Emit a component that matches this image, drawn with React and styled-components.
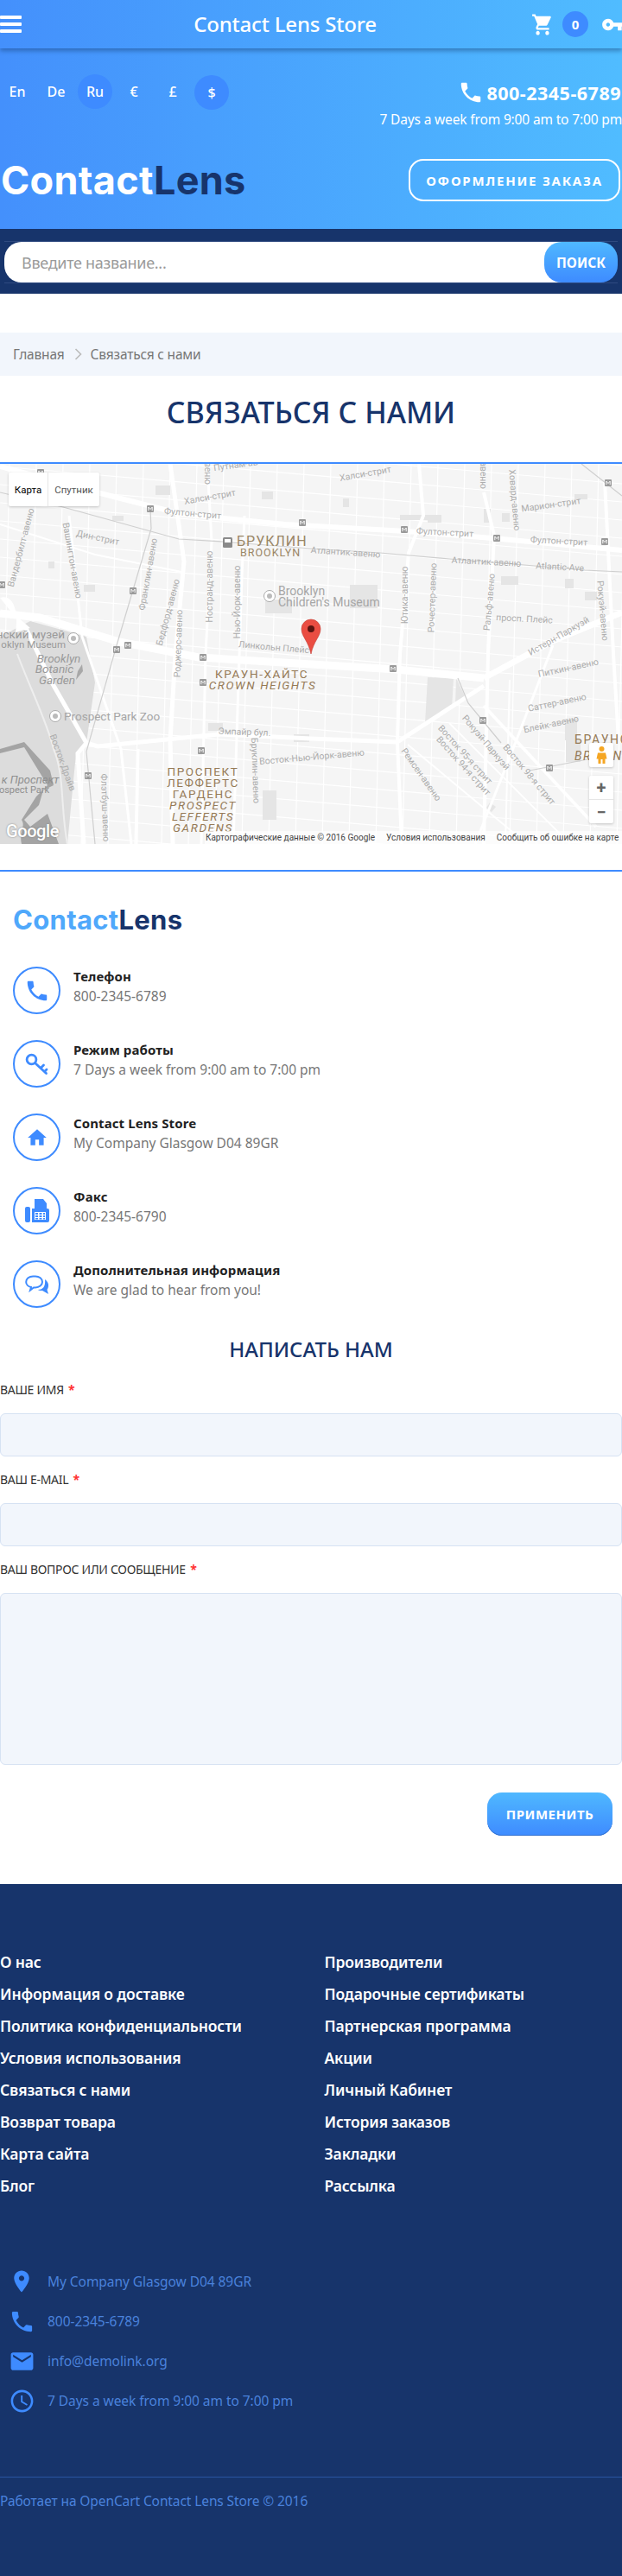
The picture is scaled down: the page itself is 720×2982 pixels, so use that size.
import React from "react";
import styled, { createGlobalStyle } from "styled-components";

const BLUE = "#3e8bff";
const NAVY = "#17346b";
const FONT = '"Noto Sans", "Open Sans", sans-serif';

const Global = createGlobalStyle`
  * { box-sizing: border-box; }
  html, body { margin: 0; padding: 0; background: #fff; }
  body { font-family: ${FONT}; color: #777; overflow-x: hidden; }
`;

const Page = styled.div`width: 720px; overflow: hidden;`;
const Header = styled.header`
  background: linear-gradient(90deg, #4490fc 0%, #50bcff 100%);
  height: 265px; color: #fff;
`;
const TopBar = styled.div`
  height: 56px; display: flex; align-items: center; overflow: hidden;
  background: linear-gradient(90deg, #4490fc 0%, #50bcff 100%);
  box-shadow: 0 3px 5px rgba(20, 60, 110, .45);
  position: relative;
`;
const Burger = styled.div`
  width: 25px; height: 20px; display: flex; flex-direction: column; justify-content: space-between;
  span { display: block; height: 4px; background: #fff; border-radius: 1px; }
`;
const Title = styled.div`
  flex: 1; text-align: center; font-size: 24px; font-weight: 500; padding-left: 20px; letter-spacing: -.2px; line-height: 30px;
`;
const TopRight = styled.div`
  width: 105px; display: flex; align-items: center; flex: none; height: 56px;
`;
const Badge = styled.div`
  width: 30px; height: 30px; border-radius: 50%; background: ${BLUE}; margin-left: 10px;
  display: flex; align-items: center; justify-content: center; font-size: 15px; font-weight: 700; flex: none;
`;
const Ico = styled.svg`
  display: block; flex: none; fill: ${p => p.$c || "currentColor"};
`;
const KeyWrap = styled.div`margin-left: 15px; width: 25px; overflow: hidden; flex: none;`;
const InfoRow = styled.div`
  display: flex; justify-content: space-between; padding-top: 30px; height: 92px;
`;
const Langs = styled.div`display: flex; gap: 5px; height: 41px;`;
const Lang = styled.div`
  width: 40px; height: 40px; border-radius: 50%; display: flex; align-items: center; justify-content: center;
  font-size: 16px; font-weight: 500; background: ${p => (p.$on ? BLUE : "transparent")};
  margin-top: ${p => p.$drop || 0}px;
`;
const Contact = styled.div`display: flex; flex-direction: column; align-items: flex-end;`;
const PhoneLine = styled.div`
  height: 42px; display: flex; align-items: center; gap: 3px; font-size: 21.5px; font-weight: 700; letter-spacing: .5px; margin-right: 1px;
`;
const Hours = styled.div`font-size: 15.5px; line-height: 20px; letter-spacing: -.15px;`;
const LogoRow = styled.div`
  display: flex; justify-content: space-between; align-items: center; padding-top: 36px; padding-right: 2px;
`;
const Logo = styled.div`
  font-family: Inter, "Noto Sans", sans-serif; font-weight: 700; font-size: ${p => p.$size}px; line-height: 1;
  letter-spacing: ${p => p.$ls}px; color: ${p => p.$c};
  margin-left: ${p => p.$ml || 0}px;
  span { color: ${NAVY}; }
`;
const OutlineBtn = styled.div`
  width: 245px; height: 49px; border: 2px solid #fff; border-radius: 17px;
  display: flex; align-items: center; justify-content: center;
  font-size: 15px; font-weight: 700; letter-spacing: 1.75px;
`;
const SearchBand = styled.div`background: ${NAVY}; height: 75px; padding: 14px 5px 0;`;
const SearchBox = styled.div`
  height: 49px; display: flex; border-top: 1px solid #2f4a80; border-bottom: 1px solid #2f4a80; padding-bottom: 1px;
`;
const SearchInput = styled.input`
  flex: 1; min-width: 0; height: 47px; border: 0; outline: 0; background: #fff; border-radius: 20px 0 0 20px;
  padding: 0 20px; font: 400 18px ${FONT}; letter-spacing: -.3px; margin-right: -20px;
  &::placeholder { color: #9a9a9a; opacity: 1; }
`;
const SearchBtn = styled.div`
  width: 85px; height: 47px; border-radius: 20px; position: relative;
  background: linear-gradient(180deg, #4fb8ff, #3e8bff);
  display: flex; align-items: center; justify-content: center; color: #fff; font-size: 15.5px; font-weight: 700;
`;
const Crumbs = styled.nav`
  margin-top: 45px; height: 50px; background: #f2f6fc; display: flex; align-items: center; padding-left: 15px;
  font-size: 15.5px; letter-spacing: -.2px; color: #777;
`;
const CrumbSep = styled.svg`width: 9px; height: 14px; margin: 0 10px 0 11px; fill: none; stroke: #bbb; stroke-width: 1.6;`;
const H1 = styled.h1`
  margin: 22px 0 38px; text-align: center; font-size: 34px; line-height: 40px; font-weight: 500; color: ${NAVY};
`;
const MapFrame = styled.div`
  position: relative; height: 442px; border-top: 2px solid ${BLUE}; overflow: hidden; background: #f5f5f5;
  svg.map { display: block; }
`;
const MapType = styled.div`
  position: absolute; left: 10px; top: 10px; width: 105px; height: 39px; background: #fff; border-radius: 2px;
  box-shadow: 0 1px 3px rgba(0,0,0,.2); display: flex; font: 400 11.5px Roboto, sans-serif; color: #565656;
`;
const MapTab = styled.div`
  display: flex; align-items: center; justify-content: center; width: ${p => p.$w}px;
  color: ${p => (p.$on ? "#000" : "#565656")}; border-right: ${p => (p.$on ? "1px solid #e6e6e6" : "0")};
`;
const Peg = styled.div`
  position: absolute; left: 682px; top: 323px; width: 28px; height: 28px; background: #fff; border-radius: 2px;
  box-shadow: 0 1px 3px rgba(0,0,0,.2); display: flex; align-items: center; justify-content: center;
`;
const Zoom = styled.div`
  position: absolute; left: 682px; top: 361px; width: 28px; height: 55px; background: #fff; border-radius: 2px;
  box-shadow: 0 1px 3px rgba(0,0,0,.2); display: flex; flex-direction: column; color: #666;
  font: 700 20px Roboto, sans-serif;
`;
const ZoomBtn = styled.div`
  flex: 1; display: flex; align-items: center; justify-content: center; line-height: 1;
  & + & { border-top: 1px solid #e6e6e6; }
`;
const Attribution = styled.div`
  position: absolute; right: 0; bottom: 0; width: 483px; height: 15px; background: rgba(255,255,255,.7);
  display: flex; gap: 13px; align-items: center; padding-left: 1px; white-space: nowrap;
  font: 400 10px Roboto, sans-serif; color: #444;
`;
const GoogleMark = styled.div`
  position: absolute; left: 7px; top: 413px; font: 500 20px Roboto, sans-serif; color: #fff; letter-spacing: -.4px;
  text-shadow: 0 0 2px #777;
`;
const Rule = styled.div`height: 2px; background: ${BLUE}; margin-top: 30px;`;
const Info = styled.section`padding: 40px 0 0 15px;`;
const Rows = styled.div`display: flex; flex-direction: column; gap: 30px; margin-top: 39px;`;
const Row = styled.div`display: flex; gap: 15px; height: 55px;`;
const Circle = styled.div`
  width: 55px; height: 55px; border-radius: 50%; border: 2px solid ${BLUE}; flex: none;
  display: flex; align-items: center; justify-content: center; color: ${BLUE};
`;
const RowTitle = styled.div`font-size: 15px; line-height: 22px; font-weight: 700; color: #222; letter-spacing: .1px; margin-bottom: 1px;`;
const RowValue = styled.div`font-size: 15.5px; line-height: 22px; color: #777; letter-spacing: 0;`;
const H2 = styled.h2`
  margin: 33px 0 22px; text-align: center; font-size: 24px; line-height: 30px; font-weight: 500; color: ${NAVY};
`;
const Label = styled.label`
  display: block; font-size: 14px; line-height: 20px; color: #333; letter-spacing: -.3px; margin-bottom: 17px;
  b { color: #f33; font-weight: 700; margin-left: 2px; }
`;
const Field = styled.input`
  display: block; width: 100%; height: 50px; background: #f2f6fc; border: 1px solid #d6e2f3; border-radius: 6px;
  margin-bottom: 17px; outline: 0;
`;
const Area = styled.textarea`
  display: block; width: 100%; height: 199px; background: #f2f6fc; border: 1px solid #d6e2f3; border-radius: 6px;
  outline: 0; resize: none; margin: 0;
`;
const BtnRow = styled.div`display: flex; justify-content: flex-end; padding: 32px 11px 56px 0;`;
const SubmitBtn = styled.div`
  width: 145px; height: 50px; border-radius: 17px; background: linear-gradient(180deg, #4fb8ff, #3e8bff);
  box-shadow: inset 0 -1px 0 #2f6fd0;
  display: flex; align-items: center; justify-content: center; color: #fff; font-size: 15px; font-weight: 700; letter-spacing: .5px;
`;
const Footer = styled.footer`background: ${NAVY}; height: 801px; padding-top: 72px;`;
const LinkCols = styled.div`display: grid; grid-template-columns: 375.5px 1fr;`;
const FootLink = styled.div`color: #fff; font-size: 17.5px; font-weight: 600; line-height: 37px; letter-spacing: -.15px;`;
const FootInfo = styled.div`margin-top: 69px; padding-left: 10px;`;
const FootRow = styled.div`
  height: 46px; display: flex; align-items: center; gap: 15px; font-size: 15.5px; color: #4a82dc; letter-spacing: -.05px;
`;
const IconBox = styled.div`width: 30px; display: flex; justify-content: center; flex: none;`;
const FootLine = styled.div`height: 1px; background: #2a55a0; margin-top: 65px;`;
const Copy = styled.div`font-size: 15.5px; line-height: 20px; color: #4a82dc; margin-top: 17px; letter-spacing: -.1px;`;

const P = {
  phone: "M6.62 10.79c1.44 2.83 3.76 5.14 6.59 6.59l2.2-2.2c.27-.27.67-.36 1.02-.24 1.12.37 2.33.57 3.57.57.55 0 1 .45 1 1V20c0 .55-.45 1-1 1-9.39 0-17-7.61-17-17 0-.55.45-1 1-1h3.5c.55 0 1 .45 1 1 0 1.25.2 2.45.57 3.57.11.35.03.74-.25 1.02l-2.2 2.2z",
  cart: "M7 18c-1.1 0-1.99.9-1.99 2S5.9 22 7 22s2-.9 2-2-.9-2-2-2zM1 2v2h2l3.6 7.59-1.35 2.45c-.16.28-.25.61-.25.96 0 1.1.9 2 2 2h12v-2H7.42c-.14 0-.25-.11-.25-.25l.03-.12.9-1.63h7.45c.75 0 1.41-.41 1.75-1.03l3.58-6.49c.08-.14.12-.31.12-.48 0-.55-.45-1-1-1H5.21l-.94-2H1zm16 16c-1.1 0-1.99.9-1.99 2s.89 2 1.99 2 2-.9 2-2-.9-2-2-2z",
  key: "M12.65 10C11.83 7.67 9.61 6 7 6c-3.31 0-6 2.69-6 6s2.69 6 6 6c2.61 0 4.83-1.67 5.65-4H17v4h4v-4h2v-4H12.65zM7 14c-1.1 0-2-.9-2-2s.9-2 2-2 2 .9 2 2-.9 2-2 2z",
  home: "M10 20v-6h4v6h5v-8h3L12 3 2 12h3v8z",
  place: "M12 2C8.13 2 5 5.13 5 9c0 5.25 7 13 7 13s7-7.75 7-13c0-3.87-3.13-7-7-7zm0 9.5c-1.38 0-2.5-1.12-2.5-2.5s1.12-2.5 2.5-2.5 2.5 1.12 2.5 2.5-1.12 2.5-2.5 2.5z",
  mail: "M20 4H4c-1.1 0-1.99.9-1.99 2L2 18c0 1.1.9 2 2 2h16c1.1 0 2-.9 2-2V6c0-1.1-.9-2-2-2zm0 4l-8 5-8-5V6l8 5 8-5v2z",
  clock: "M11.99 2C6.47 2 2 6.48 2 12s4.47 10 9.99 10C17.52 22 22 17.52 22 12S17.52 2 11.99 2zM12 20c-4.42 0-8-3.58-8-8s3.58-8 8-8 8 3.58 8 8-3.58 8-8 8zm.5-13H11v6l5.25 3.15.75-1.23-4.5-2.67z",
};

const Icon = ({ d, w = 24, h, c, rotate }) => (
  <Ico $c={c} width={w} height={h || w} viewBox="0 0 24 24" preserveAspectRatio="none">
    <path d={d} transform={rotate ? `rotate(${rotate} 12 12)` : undefined} />
  </Ico>
);

const FaxIcon = () => (
  <Ico width="28" height="27" viewBox="0 0 28 27" $c={BLUE}>
    <rect x="0" y="9" width="6" height="18" rx="2" />
    <path fillRule="evenodd" d="M8 11h3V0h10l4 5v6h1a2 2 0 0 1 2 2v12a2 2 0 0 1-2 2H8zM11 15v9h13v-9z" />
    <path d="M12 16h3v2h-3zM16.5 16h3v2h-3zM21 16h2v2h-2zM12 19h3v2h-3zM16.5 19h3v2h-3zM21 19h2v2h-2zM12 22h3v1.5h-3zM16.5 22h3v1.5h-3zM21 22h2v1.5h-2z" />
  </Ico>
);
const KeyIcon = () => (
  <Ico width="28" height="26" viewBox="0 0 28 26" $c="none">
    <g fill="none" stroke={BLUE} strokeWidth="2.8" strokeLinecap="round">
      <circle cx="7.500" cy="7.500" r="5.400" />
      <path d="M11.500 11.500l13 12M18 17.500l3.500-3.500M22.500 21.500l2.500-2.500" />
    </g>
  </Ico>
);
const ChatIcon = () => (
  <Ico width="28" height="22" viewBox="0 0 28 22" $c="none">
    <path d="M1.200 8a8 6.600 0 0 1 8-6.600H12A8 6.600 0 0 1 20 8a8 6.400 0 0 1-8 6.400H10L6 17.500l1-3.500A7 6 0 0 1 1.200 8z" fill="none" stroke={BLUE} strokeWidth="2" />
    <path d="M23 5c3 2 4.500 5 4 8-.2 2-1 3-1.500 4l1.500 5-7-4c-2 .2-4 0-5-1 5 0 9-3 8-12z" fill={BLUE} />
  </Ico>
);

const Pin = ({ x, y }) => <g transform={`translate(${x - 4} ${y - 4})`}><rect width="8" height="8" rx="1" fill="#9a9a9a" /><path d="M1.800 6.200V2l2.200 2.600L6.200 2v4.200" fill="none" stroke="#fff" strokeWidth=".9" /></g>;

const H_LINES = Array.from({ length: 30 }, (_, i) => -60 + i * 21);
const V_LINES = Array.from({ length: 26 }, (_, i) => -20 + i * 31);

const ROADS = [
  ["M0,3 L120,35 L210,58 L330,70 L470,78 L570,86 L720,100", 6],
  ["M0,173 L46,178 L138,206 L230,224 L459,238 L560,248", 9],
  ["M560,248 L640,205 L720,172", 7],
  ["M30,190 L60,253 L100,323 L90,335 L97,440", 5],
  ["M100,323 L113,327 L253,313 L360,318 L460,322 L560,257", 5],
  ["M197,0 L213,113 L203,220 L197,320 L200,440", 5],
  ["M485,0 L490,60 L473,103 L463,220 L460,322 L465,440", 4],
  ["M560,33 L572,83 L565,220 L560,440", 4],
  ["M283,60 L280,130 L270,440", 3],
  ["M240,0 L245,90 L238,220 L233,440", 3],
  ["M700,20 L710,220 L716,320", 4],
  ["M80,60 L95,200 L140,330 L152,440", 3],
  ["M160,330 L158,440", 3],
  ["M472,325 L610,440", 2],
  ["M520,300 L660,440", 2],
  ["M560,280 L690,420", 4],
  ["M590,250 L585,440", 2],
  ["M640,210 L590,340 L550,440", 3],
  ["M0,70 L110,105 L210,125", 2],
];
const RAILS = [
  "M0,33 L73,50 L207,87 L257,90 L360,98 L440,103 L520,110 L607,117 L677,123 L720,125",
  "M174,53 L175,75 L135,210 L100,333 L110,440",
  "M530,248 L542,277 L580,323",
  "M613,355 L680,342",
  "M673,0 L720,37",
];
const BLOCKS = [
  "M405,140H437V167H405z", "M307,157H338V173H307z", "M495,247L525,248L523,283L492,300z", "M528,248L540,273L527,280z",
  "M180,25L197,25L197,36L180,36z", "M303,32H316V41H303z", "M397,40H404V50H397z", "M463,59H511V65H463z", "M495,60H511V68H495z",
  "M560,52H568V68H560z", "M581,57H590V67H581z", "M580,130H600V140H580z", "M654,133H664V144H654z", "M677,148H691V158H677z",
  "M56,113H63V121H56z", "M97,140H110V148H97z", "M241,300H258V309H241z", "M340,313H358V322H340z", "M304,378H320V412H304z",
  "M567,392L574,397L569,403L563,398z", "M654,295H668V320H654z", "M655,320H672V345H655z", "M130,60H143V66H130z", "M665,35H680V41H665z",
];

const labels = [
  ["Халси-стрит", 243, 39, -10], ["Халси-стрит", 423, 12, -10], ["Фултон-стрит", 223, 58, 5], ["Фултон-стрит", 515, 80, 3],
  ["Фултон-стрит", 647, 90, 3], ["Путнам-ав", 273, 2, -8], ["Марион-стрит", 638, 48, -8], ["Ховард-авеню", 595, 42, 85],
  ["авеню", 559, 13, 90], ["авеню", 240, 8, 90], ["Вандербилт-авеню", 25, 97, -75], ["Вашингтон-авеню", 83, 112, 80],
  ["Дин-стрит", 113, 86, 12], ["Франклин-авеню", 172, 128, -80], ["Бедфорд-авеню", 195, 172, -75], ["Роджерс-авеню", 207, 208, -88],
  ["Ностранд-авеню", 243, 142, -90], ["Нью-Йорк-авеню", 275, 160, -90], ["Линкольн Плейс", 317, 213, 5], ["Атлантик-авеню", 400, 103, 4],
  ["Атлантик-авеню", 563, 114, 3], ["Atlantic-Ave", 648, 120, 3], ["Ютика-авеню", 469, 152, -90], ["Рочестер-авеню", 501, 155, -88],
  ["Ральф-авеню", 567, 160, -85], ["просп. Плейс", 607, 180, 3], ["Рокуэй-авеню", 697, 170, 85], ["Истерн-Паркуэй", 647, 200, -30],
  ["Питкин-авеню", 658, 237, -12], ["Саттер-авеню", 645, 277, -12], ["Блейк-авеню", 638, 302, -12], ["Рокуэй-Паркуэй", 562, 323, 50],
  ["Восток 98-я стрит", 612, 360, 50], ["Восток 95-я стрит", 538, 337, 48], ["Восток 94-я стрит", 536, 350, 48], ["Ремсен-авеню", 487, 360, 55],
  ["Восток-Нью-Йорк-авеню", 361, 340, -5], ["Бруклин-авеню", 295, 355, 88], ["Эмпайр бул.", 283, 311, 2], ["Флэтбуш-авеню", 121, 398, 88],
  ["Восток-Драйв", 72, 346, 70],
];
const hood = [
  ["КРАУН-ХАЙТС", 303, 248, "normal"], ["CROWN HEIGHTS", 304, 261, "italic"],
  ["ПРОСПЕКТ", 235, 361, "normal"], ["ЛЕФФЕРТС", 235, 374, "normal"], ["ГАРДЕНС", 235, 387, "normal"],
  ["PROSPECT", 235, 400, "italic"], ["LEFFERTS", 235, 413, "italic"], ["GARDENS", 235, 426, "italic"],
];

const MapArt = () => (
  <svg className="map" width="720" height="440" viewBox="0 0 720 440" fontFamily="Roboto, sans-serif">
    <rect width="720" height="440" fill="#f5f5f5" />
    {H_LINES.map(y => <line key={y} x1="0" y1={y} x2="720" y2={y + 62} stroke="#fff" strokeWidth="1.2" />)}
    {V_LINES.map(x => <line key={x} x1={x} y1="0" x2={x - 10} y2="440" stroke="#fff" strokeWidth="1.2" />)}
    <path d="M0,200 L35,182 L100,200 L110,253 L100,323 L88,335 L78,440 L0,440z" fill="#dcdcdc" />
    <path d="M0,155 C15,150 22,170 18,195 L35,190 L12,170z" fill="#fff" />
    {BLOCKS.map((d, i) => <path key={i} d={d} fill="#e5e5e5" />)}
    {ROADS.map(([d, w], i) => <path key={i} d={d} fill="none" stroke="#fff" strokeWidth={w} />)}
    <path d="M20,220 C35,260 55,300 62,330 C75,360 70,400 78,440" fill="none" stroke="#eee" strokeWidth="2" />
    {RAILS.map((d, i) => <path key={i} d={d} fill="none" stroke="#cfcfcf" strokeWidth="1.2" />)}
    <path d="M0,330 L28,322 L58,355 L62,372 L50,378 L45,395 L28,412 L35,420 L55,405 L68,440 L25,440 C22,425 30,420 25,412 L42,385 L55,372 L28,328 L0,335z" fill="#a4a4a4" />
    <path d="M90,240 L95,232 L96,240 L88,250z" fill="#a8a8a8" />
    {labels.map(([t, x, y, r]) => (
      <text key={t + x} x={x} y={y} transform={`rotate(${r} ${x} ${y})`} textAnchor="middle" dominantBaseline="middle" fontSize="10.5" fill="#adadad">{t}</text>
    ))}
    <text x="274" y="95" fontSize="16" letterSpacing="1" fill="#9a8666">БРУКЛИН</text>
    <text x="278" y="107" fontSize="12.5" letterSpacing="1" fill="#9a8666">BROOKLYN</text>
    {hood.map(([t, x, y, s]) => (
      <text key={t} x={x} y={y} textAnchor="middle" fontSize="13.5" fontStyle={s} letterSpacing="1.6" fontWeight="400" fill="#957a56">{t}</text>
    ))}
    <text x="665" y="324" fontSize="14" letterSpacing="1.6" fill="#957a56">БРАУНС</text>
    <text x="665" y="343" fontSize="14" letterSpacing="1.6" fontStyle="italic" fill="#957a56">BROWNS</text>
    <text x="74" y="297" fontSize="13.5" fill="#a6a6a6">Prospect Park Zoo</text>
    <g fontSize="13.500" fontStyle="italic" fill="#999" textAnchor="middle">
      <text x="68" y="230">Brooklyn</text>
      <text x="63" y="242">Botanic</text>
      <text x="66" y="255">Garden</text>
    </g>
    <text x="75" y="202" fontSize="13.5" textAnchor="end" fill="#999">нский музей</text>
    <text x="76" y="213" fontSize="11.5" textAnchor="end" fill="#999">oklyn Museum</text>
    <text x="322" y="152" fontSize="14" fill="#a6a6a6">Brooklyn</text>
    <text x="322" y="165" fontSize="14" fill="#a6a6a6">Children's Museum</text>
    <text x="35" y="370" fontSize="13" fontStyle="italic" textAnchor="middle" fill="#8f8f8f">к Проспект</text>
    <text x="28" y="381" fontSize="11" textAnchor="middle" fill="#8f8f8f">ospect Park</text>
    {[[85, 202], [312, 153], [64, 292]].map(([x, y]) => (
      <g key={x}><circle cx={x} cy={y} r="6.5" fill="#fff" stroke="#aaa" /><circle cx={x} cy={y} r="3" fill="#bbb" /></g>
    ))}
    {[[174, 52], [350, 68], [154, 147], [135, 215], [148, 210], [47, 10], [2, 140], [468, 76], [575, 86], [700, 90], [704, 22], [235, 224], [235, 253], [233, 332], [102, 361], [455, 237], [559, 297], [636, 352]].map(([x, y]) => <Pin key={x + "-" + y} x={x} y={y} />)}
    <rect x="258" y="85" width="11" height="12" rx="1.500" fill="#8a8a8a" />
    <rect x="260" y="87" width="7" height="4" fill="#fff" />
    <path d="M360,220 C357,205 349,200 349,191 A11,11 0 0 1 371,191 C371,200 363,205 360,220z" fill="#ea4d42" stroke="#c23a30" strokeWidth=".6" />
    <circle cx="360" cy="191" r="4" fill="#5a1410" />
  </svg>
);

const PegMan = () => (
  <svg width="13" height="20" viewBox="0 0 13 20">
    <circle cx="6.500" cy="3" r="3" fill="#f5a623" />
    <path d="M2 7.500h9l1.500 7H10.500V20h-3v-5h-2v5h-3v-5.500H.5z" fill="#f5a623" />
  </svg>
);

const left = ["О нас", "Информация о доставке", "Политика конфиденциальности", "Условия использования", "Связаться с нами", "Возврат товара", "Карта сайта", "Блог"];
const right = ["Производители", "Подарочные сертификаты", "Партнерская программа", "Акции", "Личный Кабинет", "История заказов", "Закладки", "Рассылка"];

export default function App() {
  return (
    <Page>
      <Global />
      <Header>
        <TopBar>
          <Burger><span /><span /><span /></Burger>
          <Title>Contact Lens Store</Title>
          <TopRight>
            <Icon d={P.cart} w={26} h={29} />
            <Badge>0</Badge>
            <KeyWrap><Icon d={P.key} w={27} /></KeyWrap>
          </TopRight>
        </TopBar>
        <InfoRow>
          <Langs>
            <Lang>En</Lang>
            <Lang>De</Lang>
            <Lang $on>Ru</Lang>
            <Lang>€</Lang>
            <Lang>£</Lang>
            <Lang $on $drop={1}>$</Lang>
          </Langs>
          <Contact>
            <PhoneLine><Icon d={P.phone} w={30} />800-2345-6789</PhoneLine>
            <Hours>7 Days a week from 9:00 am to 7:00 pm</Hours>
          </Contact>
        </InfoRow>
        <LogoRow>
          <Logo $size={45} $ls={0.3} $c="#fff" $ml={1}>Contact<span>Lens</span></Logo>
          <OutlineBtn>ОФОРМЛЕНИЕ ЗАКАЗА</OutlineBtn>
        </LogoRow>
      </Header>
      <SearchBand>
        <SearchBox>
          <SearchInput placeholder="Введите название..." />
          <SearchBtn>ПОИСК</SearchBtn>
        </SearchBox>
      </SearchBand>
      <Crumbs>
        Главная
        <CrumbSep viewBox="0 0 9 14"><path d="M1.500 1l6 6-6 6" /></CrumbSep>
        Связаться с нами
      </Crumbs>
      <H1>СВЯЗАТЬСЯ С НАМИ</H1>
      <MapFrame>
        <MapArt />
        <MapType>
          <MapTab $on $w={46}>Карта</MapTab>
          <MapTab $w={59}>Спутник</MapTab>
        </MapType>
        <Peg><PegMan /></Peg>
        <Zoom><ZoomBtn>+</ZoomBtn><ZoomBtn>−</ZoomBtn></Zoom>
        <GoogleMark>Google</GoogleMark>
        <Attribution>
          <span>Картографические данные © 2016 Google</span>
          <span>Условия использования</span>
          <span>Сообщить об ошибке на карте</span>
        </Attribution>
      </MapFrame>
      <Rule />
      <Info>
        <Logo $size={31} $ls={0.3} $c="#4fa8fb">Contact<span>Lens</span></Logo>
        <Rows>
          <Row><Circle><Icon d={P.phone} w={30} c={BLUE} /></Circle><div><RowTitle>Телефон</RowTitle><RowValue>800-2345-6789</RowValue></div></Row>
          <Row><Circle><KeyIcon /></Circle><div><RowTitle>Режим работы</RowTitle><RowValue>7 Days a week from 9:00 am to 7:00 pm</RowValue></div></Row>
          <Row><Circle><Icon d={P.home} w={26} c={BLUE} /></Circle><div><RowTitle>Contact Lens Store</RowTitle><RowValue>My Company Glasgow D04 89GR</RowValue></div></Row>
          <Row><Circle><FaxIcon /></Circle><div><RowTitle>Факс</RowTitle><RowValue>800-2345-6790</RowValue></div></Row>
          <Row><Circle><ChatIcon /></Circle><div><RowTitle>Дополнительная информация</RowTitle><RowValue>We are glad to hear from you!</RowValue></div></Row>
        </Rows>
      </Info>
      <H2>НАПИСАТЬ НАМ</H2>
      <form>
        <Label>ВАШЕ ИМЯ <b>*</b></Label>
        <Field />
        <Label>ВАШ E-MAIL <b>*</b></Label>
        <Field />
        <Label>ВАШ ВОПРОС ИЛИ СООБЩЕНИЕ <b>*</b></Label>
        <Area />
        <BtnRow><SubmitBtn>ПРИМЕНИТЬ</SubmitBtn></BtnRow>
      </form>
      <Footer>
        <LinkCols>
          <div>{left.map(t => <FootLink key={t}>{t}</FootLink>)}</div>
          <div>{right.map(t => <FootLink key={t}>{t}</FootLink>)}</div>
        </LinkCols>
        <FootInfo>
          <FootRow><IconBox><Icon d={P.place} w={30} c={BLUE} /></IconBox>My Company Glasgow D04 89GR</FootRow>
          <FootRow><IconBox><Icon d={P.phone} w={31} c={BLUE} /></IconBox>800-2345-6789</FootRow>
          <FootRow><IconBox><Icon d={P.mail} w={31} c={BLUE} /></IconBox>info@demolink.org</FootRow>
          <FootRow><IconBox><Icon d={P.clock} w={31} c={BLUE} /></IconBox>7 Days a week from 9:00 am to 7:00 pm</FootRow>
        </FootInfo>
        <FootLine />
        <Copy>Работает на OpenCart Contact Lens Store © 2016</Copy>
      </Footer>
    </Page>
  );
}
